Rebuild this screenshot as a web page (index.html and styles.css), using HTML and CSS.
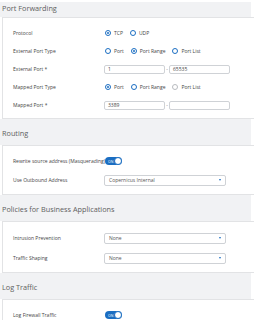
FILE: index.html
```html
<!DOCTYPE html>
<html lang="en">
<head>
    <meta charset="UTF-8">
    <title>Firewall Rule</title>
    <link rel="stylesheet" href="styles.css">
</head>
<body>
    <div class="section-title first">Port Forwarding</div>
    <div class="card">
        <div class="row">
            <div class="label">Protocol</div>
            <div class="control">
                <span class="radio checked"></span><span class="opt">TCP</span>
                <span class="radio"></span><span class="opt">UDP</span>
            </div>
        </div>
        <div class="row">
            <div class="label">External Port Type</div>
            <div class="control">
                <span class="radio"></span><span class="opt">Port</span>
                <span class="radio checked"></span><span class="opt">Port Range</span>
                <span class="radio"></span><span class="opt">Port List</span>
            </div>
        </div>
        <div class="row">
            <div class="label">External Port *</div>
            <div class="control">
                <div class="input">1</div>
                <span class="dash">-</span>
                <div class="input">65535</div>
            </div>
        </div>
        <div class="row">
            <div class="label">Mapped Port Type</div>
            <div class="control">
                <span class="radio checked"></span><span class="opt">Port</span>
                <span class="radio"></span><span class="opt">Port Range</span>
                <span class="radio disabled"></span><span class="opt">Port List</span>
            </div>
        </div>
        <div class="row">
            <div class="label">Mapped Port *</div>
            <div class="control">
                <div class="input">3389</div>
                <span class="dash">-</span>
                <div class="input"></div>
            </div>
        </div>
    </div>

    <div class="section-title">Routing</div>
    <div class="card">
        <div class="row">
            <div class="label">Rewrite source address (Masquerading)</div>
            <div class="control">
                <span class="toggle"><span class="toggle-text">ON</span><span class="knob"></span></span>
            </div>
        </div>
        <div class="row tall">
            <div class="label">Use Outbound Address</div>
            <div class="control">
                <div class="select">Copernicus Internal<span class="caret"></span></div>
            </div>
        </div>
    </div>

    <div class="section-title">Policies for Business Applications</div>
    <div class="card">
        <div class="row tall">
            <div class="label">Intrusion Prevention</div>
            <div class="control">
                <div class="select">None<span class="caret"></span></div>
            </div>
        </div>
        <div class="row tall">
            <div class="label">Traffic Shaping</div>
            <div class="control">
                <div class="select">None<span class="caret"></span></div>
            </div>
        </div>
    </div>

    <div class="section-title">Log Traffic</div>
    <div class="card">
        <div class="row">
            <div class="label">Log Firewall Traffic</div>
            <div class="control">
                <span class="toggle"><span class="toggle-text">ON</span><span class="knob"></span></span>
            </div>
        </div>
    </div>
</body>
</html>
```

FILE: styles.css
```css
* {
    margin: 0;
    padding: 0;
    box-sizing: border-box;
}

body {
    font-family: 'Open Sans', 'Liberation Sans', sans-serif;
    background: #fff;
    color: #444;
    padding-top: 2px;
    overflow: hidden;
}

.section-title {
    height: 26px;
    margin-right: 3px;
    background: #f1f2f4;
    display: flex;
    align-items: flex-end;
    padding: 0 0 7px 2px;
    font-size: 7.3px;
    line-height: 10px;
    color: #606060;
}

.section-title.first {
    height: 15px;
    padding-bottom: 4px;
}

.card {
    margin-left: 2px;
    background: #fff;
    border-left: 1px solid #e2e3e5;
    border-top: 1px solid #e2e3e5;
    border-bottom: 1px solid #e2e3e5;
    padding: 6px 0 4px 10px;
}

.row {
    display: flex;
    align-items: center;
    height: 18px;
}

.row.tall {
    height: 20px;
}

.label {
    width: 91px;
    flex-shrink: 0;
    font-size: 5px;
    color: #444;
    white-space: nowrap;
}

.control {
    display: flex;
    align-items: center;
    font-size: 5px;
    color: #444;
}

.radio {
    width: 6px;
    height: 6px;
    border: 1px solid #1b6ec2;
    border-radius: 50%;
    display: inline-flex;
    align-items: center;
    justify-content: center;
    margin: 0 3px 0 1px;
}

.radio.checked::after {
    content: '';
    width: 2px;
    height: 2px;
    border-radius: 50%;
    background: #1b6ec2;
}

.radio.disabled {
    border-color: #b8bbbf;
}

.opt {
    margin-right: 6px;
}

.input {
    width: 61px;
    height: 9px;
    border: 1px solid #cfd2d6;
    border-radius: 2px;
    padding-left: 3px;
    line-height: 7px;
}

.dash {
    width: 4px;
    text-align: center;
    color: #777;
}

.select {
    position: relative;
    width: 122px;
    height: 11px;
    border: 1px solid #cfd2d6;
    border-radius: 2px;
    padding-left: 4px;
    line-height: 9px;
    color: #555;
}

.caret {
    position: absolute;
    right: 4px;
    top: 3px;
    width: 0;
    height: 0;
    border-left: 1.5px solid transparent;
    border-right: 1.5px solid transparent;
    border-top: 2px solid #1b6ec2;
}

.toggle {
    position: relative;
    width: 17px;
    height: 8px;
    margin-left: 1px;
    border-radius: 4px;
    background: #1b6ec2;
    display: flex;
    align-items: center;
}

.toggle-text {
    font-size: 3.5px;
    color: #fff;
    padding-left: 3px;
}

.knob {
    position: absolute;
    right: 0;
    top: 0;
    width: 8px;
    height: 8px;
    border-radius: 50%;
    background: #fff;
    border: 1px solid #1b6ec2;
}
```
